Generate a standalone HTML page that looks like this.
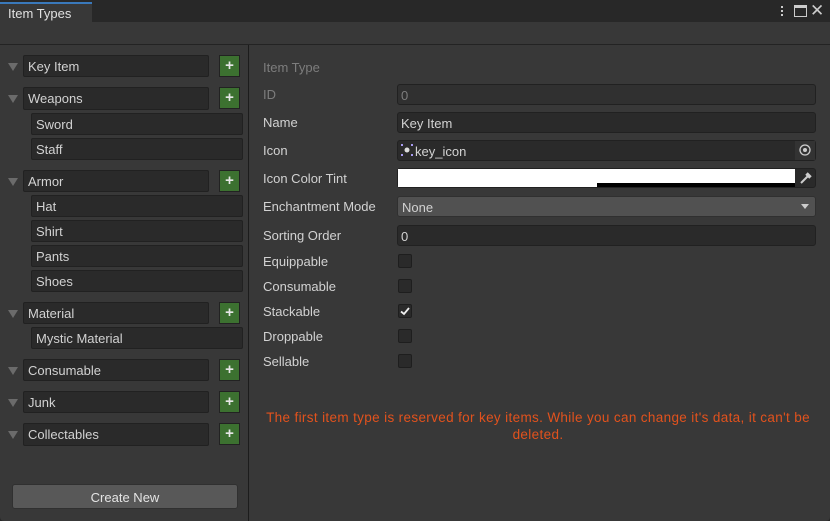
<!DOCTYPE html>
<html><head><meta charset="utf-8"><style>
*{box-sizing:border-box;margin:0;padding:0}
body{width:830px;height:521px;background:#282828;font-family:"Liberation Sans",sans-serif;font-size:13px;color:#d2d2d2;position:relative;overflow:hidden}
.a{position:absolute}
.f{position:absolute;background:#2a2a2a;border:1px solid #212121;border-radius:2px;padding-left:4px;padding-top:1px;line-height:19px;white-space:nowrap}
.tri{position:absolute;width:0;height:0;border-left:5px solid transparent;border-right:5px solid transparent;border-top:8px solid #6b6b6b}
.plus{position:absolute;width:21px;height:22px;background:#3c7130;border:1px solid #222;color:#e6e6e6;font-size:15px;font-weight:bold;line-height:20px;text-align:center}
.lb{position:absolute;left:263px;line-height:16px;margin-top:1px}
.r{position:absolute;left:397px;width:419px;height:21px;background:#2a2a2a;border:1px solid #212121;border-radius:3px;padding-left:3px;padding-top:1px;line-height:19px}
.cb{position:absolute;left:398px;width:14px;height:14px;background:#2a2a2a;border:1px solid #1e1e1e;border-radius:2px}
</style></head><body>
<div class="a" style="left:0;top:2px;width:92px;height:21px;background:#383838;border-top:2px solid #3a79bb"></div>
<div class="a" style="left:8px;top:6px;line-height:16px;color:#e0e0e0">Item Types</div>
<div class="a" style="left:781px;top:6px;width:2px;height:2px;background:#ccc;box-shadow:0 4px #ccc,0 8px #ccc"></div>
<div class="a" style="left:794px;top:5px;width:13px;height:12px;border:1.5px solid #ccc;border-top-width:3px"></div>
<div class="a" style="left:810px;top:1px;font-size:17px;color:#ccc">✕</div>
<div class="a" style="left:0;top:22px;width:830px;height:499px;background:#383838;border-radius:0 0 4px 4px"></div>
<div class="a" style="left:0;top:44px;width:830px;height:1px;background:#232323"></div>
<div class="a" style="left:248px;top:45px;width:1px;height:476px;background:#1c1c1c"></div>

<div class="tri" style="left:8px;top:63px"></div><div class="f" style="left:23px;top:55px;width:186px;height:22px">Key Item</div><div class="plus" style="left:219px;top:55px">+</div>
<div class="tri" style="left:8px;top:95px"></div><div class="f" style="left:23px;top:87px;width:186px;height:23px">Weapons</div><div class="plus" style="left:219px;top:87px">+</div>
<div class="f" style="left:31px;top:113px;width:212px;height:22px">Sword</div>
<div class="f" style="left:31px;top:138px;width:212px;height:22px">Staff</div>
<div class="tri" style="left:8px;top:178px"></div><div class="f" style="left:23px;top:170px;width:186px;height:22px">Armor</div><div class="plus" style="left:219px;top:170px">+</div>
<div class="f" style="left:31px;top:195px;width:212px;height:22px">Hat</div>
<div class="f" style="left:31px;top:220px;width:212px;height:22px">Shirt</div>
<div class="f" style="left:31px;top:245px;width:212px;height:22px">Pants</div>
<div class="f" style="left:31px;top:270px;width:212px;height:22px">Shoes</div>
<div class="tri" style="left:8px;top:310px"></div><div class="f" style="left:23px;top:302px;width:186px;height:22px">Material</div><div class="plus" style="left:219px;top:302px">+</div>
<div class="f" style="left:31px;top:327px;width:212px;height:22px">Mystic Material</div>
<div class="tri" style="left:8px;top:367px"></div><div class="f" style="left:23px;top:359px;width:186px;height:22px">Consumable</div><div class="plus" style="left:219px;top:359px">+</div>
<div class="tri" style="left:8px;top:399px"></div><div class="f" style="left:23px;top:391px;width:186px;height:22px">Junk</div><div class="plus" style="left:219px;top:391px">+</div>
<div class="tri" style="left:8px;top:431px"></div><div class="f" style="left:23px;top:423px;width:186px;height:23px">Collectables</div><div class="plus" style="left:219px;top:423px">+</div>
<div class="a" style="left:12px;top:484px;width:226px;height:25px;background:#585858;border:1px solid #303030;border-radius:3px;text-align:center;line-height:23px;color:#e4e4e4;padding-top:1px">Create New</div>

<div class="lb" style="top:59px;color:#7d7d7d">Item Type</div>
<div class="lb" style="top:86px;color:#7d7d7d">ID</div>
<div class="r" style="top:84px;color:#7d7d7d;background:#303030">0</div>
<div class="lb" style="top:114px">Name</div>
<div class="r" style="top:112px">Key Item</div>
<div class="lb" style="top:142px">Icon</div>
<div class="r" style="top:140px;padding-left:17px">key_icon</div>
<svg class="a" style="left:401px;top:144px" width="12" height="12"><circle cx="6" cy="6" r="2.5" fill="#ddd"/><rect x="0" y="0" width="2" height="2" fill="#a79af0"/><rect x="10" y="0" width="2" height="2" fill="#a79af0"/><rect x="0" y="10" width="2" height="2" fill="#a79af0"/><rect x="10" y="10" width="2" height="2" fill="#a79af0"/></svg>
<div class="a" style="left:795px;top:141px;width:20px;height:19px;background:#333"></div>
<svg class="a" style="left:798px;top:143px" width="14" height="14"><circle cx="7" cy="7" r="5" fill="none" stroke="#ccc" stroke-width="1.3"/><circle cx="7" cy="7" r="2" fill="#ccc"/></svg>
<div class="lb" style="top:170px">Icon Color Tint</div>
<div class="a" style="left:397px;top:168px;width:419px;height:20px;background:#2a2a2a;border:1px solid #212121;border-radius:3px"></div>
<div class="a" style="left:398px;top:169px;width:397px;height:18px;background:#fff"></div>
<div class="a" style="left:597px;top:183px;width:198px;height:4px;background:#000"></div>
<svg class="a" style="left:798px;top:171px" width="14" height="14"><path d="M3 12 L10 5 M8 3 L12 7 M9 2 L13 6" stroke="#ccc" stroke-width="2" fill="none"/></svg>
<div class="lb" style="top:198px">Enchantment Mode</div>
<div class="r" style="top:196px;background:#515151;border-color:#303030;padding-left:4px">None</div>
<div class="tri" style="left:801px;top:204px;border-top-color:#ccc;border-left-width:4px;border-right-width:4px;border-top-width:5px"></div>
<div class="lb" style="top:227px">Sorting Order</div>
<div class="r" style="top:225px">0</div>
<div class="lb" style="top:253px">Equippable</div><div class="cb" style="top:254px"></div>
<div class="lb" style="top:278px">Consumable</div><div class="cb" style="top:279px"></div>
<div class="lb" style="top:303px">Stackable</div><div class="cb" style="top:304px"></div>
<svg class="a" style="left:399px;top:305px" width="12" height="12"><path d="M2 6.5 L5 9 L10 3" stroke="#eee" stroke-width="1.8" fill="none"/></svg>
<div class="lb" style="top:328px">Droppable</div><div class="cb" style="top:329px"></div>
<div class="lb" style="top:353px">Sellable</div><div class="cb" style="top:354px"></div>
<div class="a" style="left:248px;top:409px;width:580px;text-align:center;color:#e2521d;line-height:17px;font-size:13.5px;letter-spacing:0.35px">The first item type is reserved for key items. While you can change it's data, it can't be<br>deleted.</div>
</body></html>
